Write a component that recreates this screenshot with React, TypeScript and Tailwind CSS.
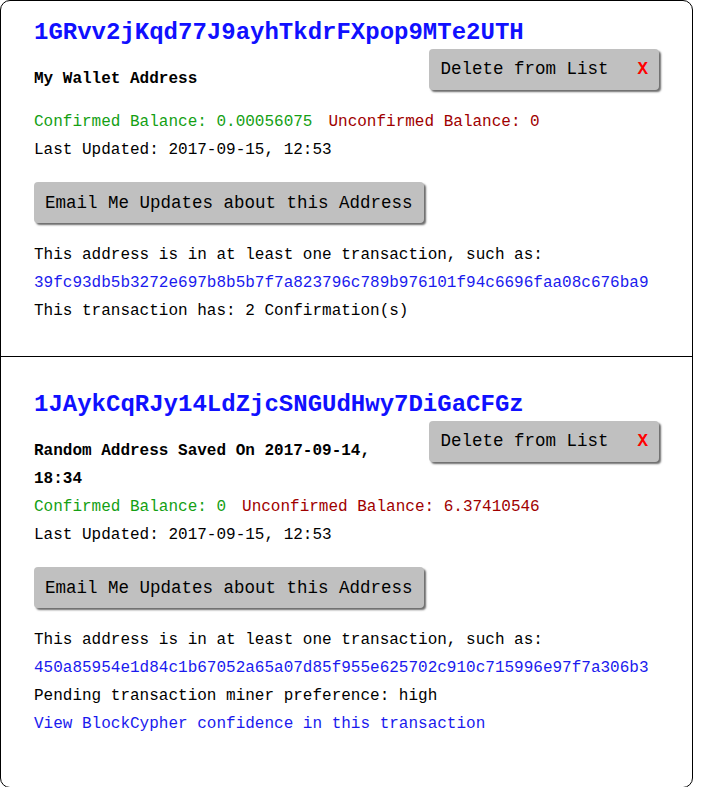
import React from "react";

interface Entry {
  address: string;
  label: string;
  confirmed: string;
  unconfirmed: string;
  updated: string;
  tx: string;
  extra: React.ReactNode;
  pt: string;
  pb: string;
}

const mono = { fontFamily: '"Liberation Mono", "DejaVu Sans Mono", monospace' };

function GrayButton({ children }: { children: React.ReactNode }) {
  return (
    <button className="h-[41px] px-[11px] bg-[#c0c0c0] rounded-[4px] shadow-[2px_2px_2px_#6b6b6b] text-[17.5px] text-black flex items-center whitespace-nowrap">
      {children}
    </button>
  );
}

function Card({ e, last }: { e: Entry; last?: boolean }) {
  return (
    <div className={`px-[33px] ${e.pt} ${e.pb} ${last ? "" : "border-b border-black"}`}>
      <h2 className="text-[24px] leading-[30px] font-bold text-[#1010ff]">{e.address}</h2>
      <div className="mt-[1px] flex items-start justify-between">
        <div className="w-[360px] mt-[16px] text-[16px] leading-[28px] font-bold text-black">
          {e.label}
        </div>
        <div className="mr-[0px] mb-[18px]">
          <GrayButton>
            Delete from List
            <span className="ml-[29px] text-[#ff0000] font-bold">X</span>
          </GrayButton>
        </div>
      </div>
      <div className="text-[16px] leading-[28px] text-black">
        <div>
          <span className="text-[#14a014]">Confirmed Balance: {e.confirmed}</span>
          <span className="ml-[16px] text-[#a00000]">Unconfirmed Balance: {e.unconfirmed}</span>
        </div>
        <div>Last Updated: {e.updated}</div>
        <div className="my-[18px] flex">
          <GrayButton>Email Me Updates about this Address</GrayButton>
        </div>
        <div>This address is in at least one transaction, such as:</div>
        <div className="text-[#1a1aee]">{e.tx}</div>
        {e.extra}
      </div>
    </div>
  );
}

const entries: Entry[] = [
  {
    address: "1GRvv2jKqd77J9ayhTkdrFXpop9MTe2UTH",
    label: "My Wallet Address",
    confirmed: "0.00056075",
    unconfirmed: "0",
    updated: "2017-09-15, 12:53",
    tx: "39fc93db5b3272e697b8b5b7f7a823796c789b976101f94c6696faa08c676ba9",
    extra: <div>This transaction has: 2 Confirmation(s)</div>,
    pt: "pt-[17px]",
    pb: "pb-[31px]",
  },
  {
    address: "1JAykCqRJy14LdZjcSNGUdHwy7DiGaCFGz",
    label: "Random Address Saved On 2017-09-14, 18:34",
    confirmed: "0",
    unconfirmed: "6.37410546",
    updated: "2017-09-15, 12:53",
    tx: "450a85954e1d84c1b67052a65a07d85f955e625702c910c715996e97f7a306b3",
    extra: (
      <>
        <div>Pending transaction miner preference: high</div>
        <div className="text-[#1a1aee]">View BlockCypher confidence in this transaction</div>
      </>
    ),
    pt: "pt-[33px]",
    pb: "pb-[49px]",
  },
];

export default function App() {
  return (
    <div className="bg-white min-h-screen" style={mono}>
      <div className="w-[693px] border border-black rounded-[10px] overflow-hidden">
        {entries.map((e, i) => (
          <Card key={e.address} e={e} last={i === entries.length - 1} />
        ))}
      </div>
    </div>
  );
}
